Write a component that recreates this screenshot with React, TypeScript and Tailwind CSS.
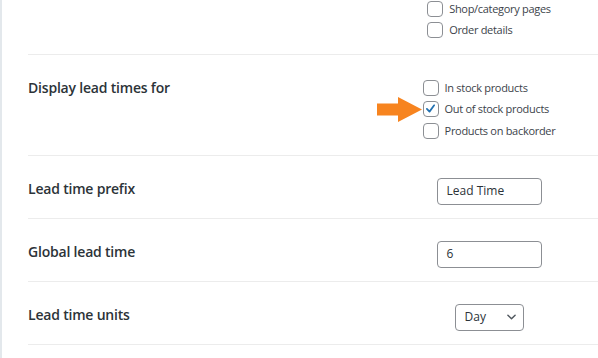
import React from "react";

const font = { fontFamily: '"Open Sans", "Noto Sans", Arial, sans-serif' };

function Box({ checked }: { checked?: boolean }) {
  return (
    <span className="relative w-[16px] h-[16px] shrink-0 rounded-[4px] border border-[#8c8f94] bg-white">
      {checked && (
        <svg viewBox="0 0 16 16" className="absolute left-[0px] top-[0px] w-[14px] h-[14px]">
          <path d="M3.3 7.8 L6.3 11 L11.6 3.8" fill="none" stroke="#2271b1" strokeWidth="2" strokeLinecap="round" strokeLinejoin="round" />
        </svg>
      )}
    </span>
  );
}

function Check({ label, checked }: { label: string; checked?: boolean }) {
  return (
    <div className="flex items-center h-[21.5px]">
      <Box checked={checked} />
      <span className="ml-[6px] text-[11px] tracking-[-0.3px] text-[#3c434a] whitespace-nowrap">
        {label}
      </span>
    </div>
  );
}

function Row({ label, children }: { label?: string; children: React.ReactNode }) {
  return (
    <div className="flex border-b border-[#ececec]">
      <div className="flex-1 pt-[24px] pb-[20px] text-[14px] leading-[18px] font-semibold tracking-[-0.2px] text-[#2c3338]">
        {label}
      </div>
      <div className="w-[218px] flex justify-center pt-[22px] pb-[13px]">{children}</div>
    </div>
  );
}

function TextInput({ value }: { value: string }) {
  return (
    <div className="w-[105px] h-[27px] border border-[#8c8f94] rounded-[4px] bg-white flex items-center pl-[9px] text-[12px] text-[#2c3338]">
      {value}
    </div>
  );
}

export default function App() {
  return (
    <div className="relative w-[598px] h-[358px] overflow-hidden bg-white flex" style={font}>
      <div className="w-[2px] bg-[#e3e8ec] shrink-0" />
      <div className="flex-1 pl-[26px] -mt-[2px]">
        <div className="flex border-b border-[#ececec]">
          <div className="flex-1" />
          <div className="w-[218px] flex justify-center pb-[13px]">
            <div className="flex flex-col">
              <Check label="Shop/category pages" />
              <Check label="Order details" />
            </div>
          </div>
        </div>
        <Row label="Display lead times for">
          <div className="flex flex-col">
            <Check label="In stock products" />
            <Check label="Out of stock products" checked />
            <Check label="Products on backorder" />
          </div>
        </Row>
        <Row label="Lead time prefix">
          <TextInput value="Lead Time" />
        </Row>
        <Row label="Global lead time">
          <TextInput value="6" />
        </Row>
        <Row label="Lead time units">
          <div className="w-[69px] h-[27px] border border-[#8c8f94] rounded-[4px] bg-white flex items-center justify-between pl-[9px] pr-[7px] text-[12px] text-[#2c3338]">
            <span>Day</span>
            <svg viewBox="0 0 10 6" className="w-[9px] h-[6px]">
              <path d="M1 1 L5 5 L9 1" fill="none" stroke="#50575e" strokeWidth="1.6" strokeLinecap="round" strokeLinejoin="round" />
            </svg>
          </div>
        </Row>
      </div>
      <svg className="absolute left-[377px] top-[97px]" width="46" height="26" viewBox="0 0 46 26">
        <polygon points="0,6.5 21,6.5 21,0 45,12.5 21,25 21,18.5 0,18.5" fill="#f7841f" />
      </svg>
    </div>
  );
}
